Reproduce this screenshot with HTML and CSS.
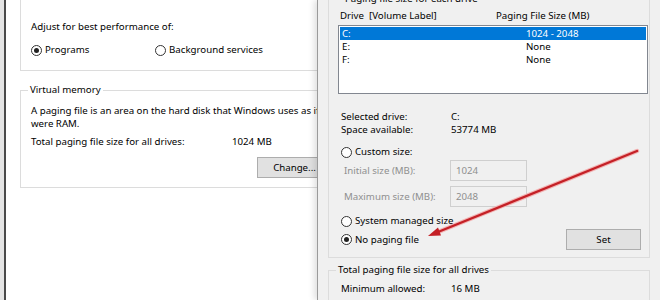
FILE: index.html
```html
<!DOCTYPE html>
<html>
<head>
<meta charset="utf-8">
<link rel="stylesheet" href="styles.css">
</head>
<body>
<div class="screen">
  <div class="edge"></div>
  <div class="perf">
    <div class="group pgroup">
      <div class="line">Adjust for best performance of:</div>
      <div class="radios">
        <label class="radio r-programs"><span class="dot checked"></span>Programs</label>
        <label class="radio"><span class="dot"></span>Background services</label>
      </div>
    </div>
    <div class="group vmgroup">
      <div class="legend">Virtual memory</div>
      <p class="desc">A paging file is an area on the hard disk that Windows uses as if<br>were RAM.</p>
      <div class="total"><span class="tlabel">Total paging file size for all drives:</span><span>1024 MB</span></div>
      <div class="btnrow"><button class="btn change">Change...</button></div>
    </div>
  </div>
  <div class="vm">
    <div class="group dgroup">
      <div class="legend">Paging file size for each drive</div>
      <div class="cols"><span class="c1">Drive&nbsp; [Volume Label]</span><span>Paging File Size (MB)</span></div>
      <div class="list">
        <div class="row sel"><span class="c1">C:</span><span>1024 - 2048</span></div>
        <div class="row"><span class="c1">E:</span><span>None</span></div>
        <div class="row"><span class="c1">F:</span><span>None</span></div>
      </div>
      <div class="info">
        <span>Selected drive:</span><span>C:</span>
        <span>Space available:</span><span>53774 MB</span>
      </div>
      <label class="radio custom"><span class="dot"></span>Custom size:</label>
      <div class="field f1"><span class="flabel">Initial size (MB):</span><span class="input">1024</span></div>
      <div class="field f2"><span class="flabel">Maximum size (MB):</span><span class="input">2048</span></div>
      <label class="radio sysman"><span class="dot"></span>System managed size</label>
      <div class="setrow">
        <label class="radio"><span class="dot checked"></span>No paging file</label>
        <button class="btn set">Set</button>
      </div>
    </div>
    <div class="group tgroup">
      <div class="legend">Total paging file size for all drives</div>
      <div class="minrow"><span class="mlabel">Minimum allowed:</span><span>16 MB</span></div>
    </div>
  </div>
  <svg class="arrow" width="660" height="300" viewBox="0 0 660 300">
    <line x1="637" y1="151" x2="438" y2="232" stroke="#f2b4b4" stroke-width="4.5" stroke-linecap="round"/>
    <line x1="637" y1="151" x2="438" y2="232" stroke="#c42026" stroke-width="2.4" stroke-linecap="round"/>
    <polygon points="428,236 441,235.5 438,227.5" fill="#c42026"/>
  </svg>
</div>
</body>
</html>
```
FILE: styles.css
```css
* { box-sizing: border-box; }
html, body { margin: 0; padding: 0; }
body {
  font-family: "Noto Sans", "Open Sans", sans-serif;
  font-size: 9.7px;
  color: #000;
  background: #fff;
}
.screen {
  position: relative;
  width: 660px;
  height: 300px;
  overflow: hidden;
  display: flex;
}
.edge {
  width: 6px;
  flex: none;
  background: #e4e4e4;
  border-right: 2px solid #4a4a4a;
}
.perf {
  width: 311px;
  flex: none;
  background: #fff;
  padding-left: 14px;
  overflow: hidden;
}
.group {
  border: 1px solid #dcdcdc;
}
.legend {
  width: fit-content;
  line-height: 16px;
  padding: 0 2px;
  margin: -9px 0 0 5px;
  background: inherit;
  white-space: nowrap;
}
.pgroup {
  margin-top: -10px;
  height: 81px;
  width: 320px;
  padding: 28px 0 0 10px;
}
.line { line-height: 16px; }
.radios { display: flex; margin-top: 7px; line-height: 16px; }
.radio { display: flex; align-items: center; line-height: 16px; white-space: nowrap; }
.r-programs { width: 124px; }
.dot {
  width: 11px;
  height: 11px;
  border: 1px solid #333;
  border-radius: 50%;
  background: #fff;
  margin-right: 3px;
  position: relative;
  flex: none;
}
.dot.checked::after {
  content: "";
  position: absolute;
  left: 2px; top: 2px;
  width: 5px; height: 5px;
  border-radius: 50%;
  background: #222;
}
.vmgroup {
  margin-top: 19px;
  width: 320px;
  background: #fff;
  padding: 0 0 9px 10px;
}
.vmgroup .legend { margin-left: -3px; }
.desc { margin: 6px 0 0; line-height: 13px; white-space: nowrap; }
.total { display: flex; line-height: 16px; margin-top: 4px; white-space: nowrap; }
.tlabel { width: 201px; }
.btnrow { margin-top: 7px; padding-left: 226px; }
.btn {
  font: inherit;
  color: #000;
  background: #e1e1e1;
  border: 1px solid #adadad;
  height: 21px;
  padding: 0;
  line-height: 19px;
}
.change { width: 75px; }
.vm {
  flex: 1;
  background: #f0f0f0;
  border-left: 1px solid #9a9a9a;
  box-shadow: -3px 0 6px rgba(0,0,0,0.12);
  padding: 0 10px 0 10px;
  position: relative;
}
.dgroup {
  margin-top: -1px;
  background: #f0f0f0;
  padding: 0 0 7px 9px;
}
.cols { display: flex; line-height: 16px; margin-top: 1px; padding-left: 2px; white-space: nowrap; }
.cols .c1 { width: 156px; }
.list {
  margin-top: 1px;
  height: 69px;
  background: #fff;
  border: 1px solid #828790;
  padding: 1px;
  margin-right: 1px;
}
.row { display: flex; line-height: 13px; height: 13px; padding-left: 2px; }
.row .c1 { width: 184px; }
.row.sel { background: #0078d7; color: #fff; }
.info {
  display: grid;
  grid-template-columns: 110px auto;
  line-height: 13px;
  margin-top: 16px;
  padding-left: 3px;
  white-space: nowrap;
}
.custom { margin-top: 8px; padding-left: 3px; }
.field { display: flex; align-items: center; height: 21px; padding-left: 6px; color: #8f8f8f; white-space: nowrap; }
.f1 { margin-top: 0; }
.f2 { margin-top: 5px; }
.flabel { width: 106px; }
.input {
  width: 77px;
  height: 21px;
  border: 1px solid #cfcfcf;
  line-height: 19px;
  padding-left: 5px;
  color: #8f8f8f;
}
.sysman { margin-top: 6px; padding-left: 3px; }
.setrow { display: flex; align-items: center; justify-content: space-between; height: 21px; padding-left: 3px; padding-right: 8px; }
.set { width: 75px; }
.tgroup {
  margin-top: 12px;
  background: #f0f0f0;
  padding: 0 0 10px 12px;
}
.tgroup .legend { margin-left: -5px; }
.minrow { display: flex; margin-top: 3px; line-height: 16px; white-space: nowrap; }
.mlabel { width: 110px; }
.arrow { position: absolute; left: 0; top: 0; pointer-events: none; }
```
